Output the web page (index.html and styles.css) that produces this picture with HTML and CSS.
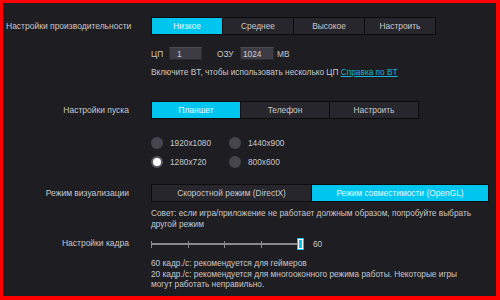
FILE: index.html
```html
<!DOCTYPE html>
<html lang="ru">
<head>
<meta charset="utf-8">
<link rel="stylesheet" href="styles.css">
</head>
<body>
<div class="frame">
  <section class="row row-perf">
    <div class="label">Настройки производительности</div>
    <div class="content">
      <div class="seg">
        <span class="btn w-perf active">Низкое</span>
        <span class="btn w-perf">Среднее</span>
        <span class="btn w-perf">Высокое</span>
        <span class="btn w-perf">Настроить</span>
      </div>
      <div class="mem">
        <span class="mem-label">ЦП</span>
        <span class="input w-cpu">1</span>
        <span class="mem-label mem-gap">ОЗУ</span>
        <span class="input w-ram">1024</span>
        <span class="mem-unit">MB</span>
      </div>
      <p class="hint">Включите BT, чтобы использовать несколько ЦП <a class="link" href="#">Справка по BT</a></p>
    </div>
  </section>

  <section class="row row-launch">
    <div class="label">Настройки пуска</div>
    <div class="content">
      <div class="seg">
        <span class="btn w-launch active">Планшет</span>
        <span class="btn w-launch">Телефон</span>
        <span class="btn w-launch">Настроить</span>
      </div>
      <div class="radios">
        <label class="radio"><span class="dot"></span>1920x1080</label>
        <label class="radio"><span class="dot"></span>1440x900</label>
        <label class="radio"><span class="dot checked"></span>1280x720</label>
        <label class="radio"><span class="dot"></span>800x600</label>
      </div>
    </div>
  </section>

  <section class="row row-render">
    <div class="label">Режим визуализации</div>
    <div class="content">
      <div class="seg">
        <span class="btn w-dx">Скоростной режим (DirectX)</span>
        <span class="btn w-gl active">Режим совместимости (OpenGL)</span>
      </div>
      <p class="tip">Совет: если игра/приложение не работает должным образом, попробуйте выбрать другой режим</p>
    </div>
  </section>

  <section class="row row-frame">
    <div class="label label-frame">Настройки кадра</div>
    <div class="content">
      <div class="slider-row">
        <div class="slider">
          <span class="track"></span>
          <span class="tick"></span><span class="tick"></span><span class="tick"></span><span class="tick"></span><span class="tick"></span>
          <span class="thumb"></span>
        </div>
        <span class="value">60</span>
      </div>
      <p class="notes">60 кадр./с: рекомендуется для геймеров<br>20 кадр./с: рекомендуется для многооконного режима работы. Некоторые игры могут работать неправильно.</p>
    </div>
  </section>
</div>
</body>
</html>
```

FILE: styles.css
```css
html, body {
  margin: 0;
  padding: 0;
}

body {
  width: 500px;
  height: 300px;
  font-family: "Liberation Sans", Arial, sans-serif;
  font-size: 8.3px;
  color: #c8c8ca;
}

.frame {
  box-sizing: border-box;
  width: 500px;
  height: 300px;
  border-style: solid;
  border-color: #ff0000;
  border-width: 3px 4px 4px 3px;
  background: #1e1d22;
  padding: 14px 0 0 3px;
}

.row {
  display: grid;
  grid-template-columns: 124px 1fr;
  column-gap: 21px;
  align-items: start;
}

.label {
  text-align: right;
  line-height: 18px;
  white-space: nowrap;
  font-size: 8.5px;
  padding-right: 1px;
}

.content {
  min-width: 0;
}

.seg {
  display: flex;
}

.btn {
  box-sizing: border-box;
  height: 18px;
  line-height: 16px;
  text-align: center;
  border: 1px solid #0c0c0f;
  background: #27262c;
  color: #c8c8ca;
  margin-right: -1px;
  font-size: 8.4px;
}

.btn.active {
  background: #00c6ef;
  color: #e6f9ff;
}

.w-perf { width: 72px; }
.w-launch { width: 90px; }
.w-dx { width: 161px; }
.w-gl { width: 178px; }

.mem {
  display: flex;
  align-items: center;
  margin-top: 12px;
  height: 13px;
}

.mem-label {
  width: 18px;
}

.mem-gap {
  margin-left: 15px;
  width: 23px;
}

.input {
  box-sizing: border-box;
  height: 13px;
  line-height: 12px;
  background: #3d3c44;
  border: 1px solid #2a2a30;
  border-top-color: #4c4b53;
  padding-left: 7px;
  color: #d0d0d2;
}

.w-cpu { width: 33px; }
.w-ram { width: 34px; padding-left: 2px; }

.mem-unit {
  margin-left: 3px;
}

.hint {
  margin: 7px 0 0;
  line-height: 11px;
}

.link {
  color: #19b5dc;
  text-decoration: underline;
}

.row-launch {
  margin-top: 23px;
}

.radios {
  display: grid;
  grid-template-columns: 78px 100px;
  row-gap: 7px;
  margin-top: 18px;
}

.radio {
  display: flex;
  align-items: center;
  height: 12px;
  gap: 7px;
}

.dot {
  box-sizing: border-box;
  width: 12px;
  height: 12px;
  border-radius: 50%;
  background: #46454d;
}

.dot.checked {
  background: #ffffff;
  border: 2px solid #5a5962;
}

.row-render {
  margin-top: 16px;
}

.tip {
  margin: 6px 0 0;
  line-height: 10.5px;
  width: 330px;
}

.row-frame {
  margin-top: 8px;
  align-items: center;
}

.label-frame {
  line-height: 12px;
  align-self: start;
}

.slider-row {
  display: flex;
  align-items: center;
  height: 14px;
}

.slider {
  position: relative;
  width: 153px;
  height: 14px;
  display: flex;
  justify-content: space-between;
  align-items: center;
  padding-right: 6px;
  box-sizing: border-box;
}

.track {
  position: absolute;
  left: 0;
  right: 4px;
  top: 6px;
  height: 2px;
  background: #8a8a8e;
}

.tick {
  position: relative;
  width: 1px;
  height: 7px;
  background: #8a8a8e;
}

.thumb {
  position: absolute;
  right: 0;
  top: 1px;
  box-sizing: border-box;
  width: 7px;
  height: 12px;
  background: #00c6ef;
  border: 1px solid #00c6ef;
  box-shadow: inset 0 0 0 1px #ffffff;
}

.value {
  margin-left: 9px;
}

.notes {
  margin: 7px 0 0;
  line-height: 10.5px;
  width: 322px;
}
```
